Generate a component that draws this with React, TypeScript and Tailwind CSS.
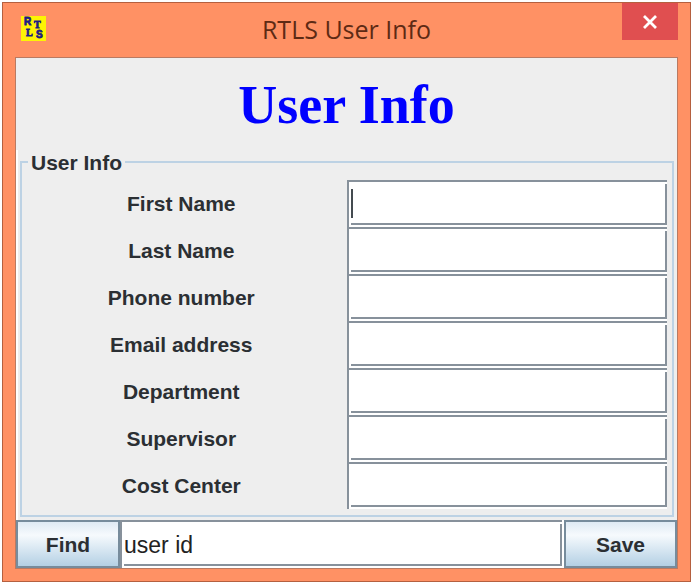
import React from "react";

const fields = [
  { id: "firstName", label: "First Name" },
  { id: "lastName", label: "Last Name" },
  { id: "phone", label: "Phone number" },
  { id: "email", label: "Email address" },
  { id: "department", label: "Department" },
  { id: "supervisor", label: "Supervisor" },
  { id: "costCenter", label: "Cost Center" },
];

function AppIcon() {
  return (
    <svg
      width="25"
      height="25"
      viewBox="0 0 25 25"
      aria-hidden="true"
      className="font-['Liberation_Serif',serif] text-[10px] font-bold"
    >
      <rect width="25" height="25" fill="#fdf404" />
      <g fill="#1c1c86" stroke="#1c1c86" strokeWidth="0.8">
        <text x="3" y="9" className="font-['Liberation_Sans',sans-serif]">R</text>
        <text x="13" y="12">T</text>
        <text x="5" y="20">L</text>
        <text x="15" y="22" className="font-['Liberation_Sans',sans-serif]">S</text>
      </g>
    </svg>
  );
}

type TextBoxProps = React.InputHTMLAttributes<HTMLInputElement> & { caret?: boolean };

function TextBox({ caret, ...props }: TextBoxProps) {
  return (
    <div className="relative h-full w-full border-t-2 border-l-2 border-[#87919b] bg-white pt-[2px] pb-[2px] pl-[2px]">
      <input
        type="text"
        className="block h-full w-full border-r-2 border-b-2 border-[#87919b] bg-white pt-[3px] text-[23px] text-[#222] outline-none"
        {...props}
      />
      {caret && <span className="absolute top-[7px] left-[2px] h-[29px] w-[2px] bg-[#444b50]" />}
    </div>
  );
}

function MetalButton({ children, className }: { children: React.ReactNode; className: string }) {
  return (
    <button
      type="button"
      className={
        "border-2 border-[#778c9c] bg-linear-to-b from-[#dfeaf4] via-[#f6fafd] via-30% to-[#b4d0e4] pt-[2px] text-[21px] font-bold text-[#2b2f33] " +
        className
      }
    >
      {children}
    </button>
  );
}

export default function App() {
  return (
    <div className="bg-white p-[2px] font-['Liberation_Sans',Arial,sans-serif] text-[#2b2f33]">
      <main className="border border-[#b5603f] bg-[#ff9164] px-3 pb-3">
        <header className="grid h-[54px] grid-cols-[56px_1fr_56px] items-start">
          <div className="pt-[13px] pl-[6px]">
            <AppIcon />
          </div>
          <div className="pt-[9px] text-center font-['Open_Sans','Noto_Sans',sans-serif] text-[25px] leading-[34px] text-[#5e2a14]">
            RTLS User Info
          </div>
          <button
            type="button"
            aria-label="Close"
            className="flex h-[37px] w-full items-center justify-center bg-[#e04f50]"
          >
            <svg width="16" height="14" viewBox="0 0 16 14" aria-hidden="true">
              <path d="M2 1 L14 13 M14 1 L2 13" stroke="#fff" strokeWidth="2.8" />
            </svg>
          </button>
        </header>

        <div className="border border-[#b97a62] bg-[#eeeeee]">
          <h1 className="pt-[2px] text-center font-['Liberation_Serif',serif] text-[54px] leading-[90px] font-bold text-[#0000ff]">
            User Info
          </h1>

          <form>
            <div className="border-l-2 border-white pr-[3px] pb-[3px] pl-[2px]">
              <fieldset className="border-2 border-[#bdd2e4] pt-[6px] pr-[5px] pb-[6px]">
                <legend className="ml-[6px] px-[3px] pt-px text-[21px] leading-[23px] font-bold">User Info</legend>
                {fields.map((f, i) => (
                  <div key={f.id} className="grid h-[47px] grid-cols-[324fr_320fr] items-center">
                    <label htmlFor={f.id} className="pt-px pr-[6px] text-center text-[21px] font-bold">
                      {f.label}
                    </label>
                    <TextBox id={f.id} name={f.id} caret={i === 0} />
                  </div>
                ))}
              </fieldset>
            </div>

            <div className="flex h-12 bg-white">
              <MetalButton className="w-[104px]">Find</MetalButton>
              <div className="min-w-0 flex-1 pr-[2px]">
                <TextBox aria-label="User id" name="userId" defaultValue="user id" />
              </div>
              <MetalButton className="w-[113px]">Save</MetalButton>
            </div>
          </form>
        </div>
      </main>
    </div>
  );
}
